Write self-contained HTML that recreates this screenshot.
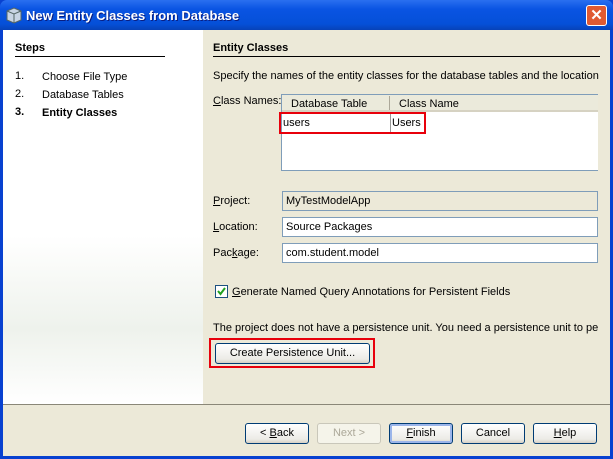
<!DOCTYPE html><html><head><style>
*{margin:0;padding:0;box-sizing:border-box}
body{width:613px;height:459px;overflow:hidden;font-family:"Liberation Sans",Arial,sans-serif;font-size:11px;color:#000;background:#0841d0;position:relative}
.a{position:absolute}
#title{left:0;top:0;width:613px;height:30px;background:linear-gradient(#2a6ff0,#0a54e3 30%,#0550d8 80%,#0742b8);border-radius:7px 7px 0 0}
#title span{position:absolute;left:26px;top:8px;color:#fff;font-weight:bold;font-size:13px;text-shadow:1px 1px #0a1e80}
#close{left:586px;top:5px;width:21px;height:21px;background:#e05a32;border:1px solid #fff;border-radius:3px;color:#fff;font-weight:bold;font-size:15px;text-align:center;line-height:19px}
#left{left:3px;top:30px;width:200px;height:374px;background:linear-gradient(#fff 55%,#eef2ec 80%,#fff)}
#right{left:203px;top:30px;width:407px;height:374px;background:#ece9d8}
#bottom{left:3px;top:404px;width:607px;height:52px;background:#ece9d8;border-top:1px solid #8a8778}
.hd{font-weight:bold;border-bottom:1px solid #000;padding-bottom:2px}
.tf{height:20px;border:1px solid #7f9db9;background:#fff;padding:3px 3px;white-space:nowrap;overflow:hidden}
.btn{height:21px;width:64px;border:1px solid #003c74;border-radius:3px;background:linear-gradient(#fff,#ecebe6 80%,#d6d0c5);text-align:center;line-height:19px}
u{text-decoration:underline}
</style></head><body>
<div id="title" class="a"><svg class="a" style="left:6px;top:7px" width="16" height="17"><path d="M8 1 L15 4 L15 13 L8 16 L1 13 L1 4Z" fill="#c8d4e4" stroke="#566"/><path d="M1 4 L8 7 L15 4 M8 7 L8 16" stroke="#566" fill="none"/></svg><span>New Entity Classes from Database</span></div>
<div id="close" class="a">✕</div>
<div id="left" class="a">
 <div class="a hd" style="left:12px;top:12px;width:150px">Steps</div>
 <div class="a" style="left:12px;top:40px">1.</div><div class="a" style="left:39px;top:41px">Choose File Type</div>
 <div class="a" style="left:12px;top:58px">2.</div><div class="a" style="left:39px;top:59px">Database Tables</div>
 <div class="a" style="left:12px;top:76px;font-weight:bold">3.</div><div class="a" style="left:39px;top:77px;font-weight:bold">Entity Classes</div>
</div>
<div id="right" class="a"></div>
<div class="a hd" style="left:213px;top:42px;width:387px">Entity Classes</div>
<div class="a" style="left:213px;top:70px;white-space:nowrap;width:387px;overflow:hidden">Specify the names of the entity classes for the database tables and the location</div>
<div class="a" style="left:213px;top:95px"><u>C</u>lass Names:</div>
<div class="a" style="left:281px;top:94px;width:317px;height:77px;border:1px solid #7f9db9;border-right:none;background:#fff">
 <div style="height:17px;background:#ebeadb;border-bottom:2px solid #d6d2c2;position:relative"><span class="a" style="left:9px;top:3px">Database Table</span><span class="a" style="left:107px;top:1px;width:1px;height:14px;background:#aca899"></span><span class="a" style="left:117px;top:3px">Class Name</span></div>
 <span class="a" style="left:1px;top:22px">users</span><span class="a" style="left:108px;top:18px;width:1px;height:20px;background:#999"></span><span class="a" style="left:110px;top:22px">Users</span>
</div>
<div class="a" style="left:279px;top:112px;width:147px;height:22px;border:2px solid #e8000b"></div>
<div class="a" style="left:213px;top:195px"><u>P</u>roject:</div>
<div class="a tf" style="left:282px;top:191px;width:316px;background:#ece9d8">MyTestModelApp</div>
<div class="a" style="left:213px;top:221px"><u>L</u>ocation:</div>
<div class="a tf" style="left:282px;top:217px;width:316px">Source Packages</div>
<div class="a" style="left:213px;top:247px">Pac<u>k</u>age:</div>
<div class="a tf" style="left:282px;top:243px;width:316px">com.student.model</div>
<div class="a" style="left:215px;top:285px;width:13px;height:13px;border:1px solid #1c5180;background:#fff"><svg width="11" height="11" class="a"><path d="M2 5 L4.5 8 L9 2" stroke="#21a121" stroke-width="2" fill="none"/></svg></div>
<div class="a" style="left:232px;top:286px"><u>G</u>enerate Named Query Annotations for Persistent Fields</div>
<div class="a" style="left:213px;top:322px;white-space:nowrap;width:385px;overflow:hidden">The project does not have a persistence unit. You need a persistence unit to per</div>
<div class="a btn" style="left:215px;top:343px;width:155px">Create Persistence Unit...</div>
<div class="a" style="left:209px;top:338px;width:166px;height:30px;border:2px solid #e8000b"></div>
<div id="bottom" class="a"></div>
<div class="a btn" style="left:245px;top:423px">&lt; <u>B</u>ack</div>
<div class="a btn" style="left:317px;top:423px;border-color:#c9c7ba;color:#aca899;background:#f5f4ea">Next &gt;</div>
<div class="a btn" style="left:389px;top:423px;box-shadow:inset 0 0 0 2px #9bb5ea"><u>F</u>inish</div>
<div class="a btn" style="left:461px;top:423px">Cancel</div>
<div class="a btn" style="left:533px;top:423px"><u>H</u>elp</div>
</body></html>
